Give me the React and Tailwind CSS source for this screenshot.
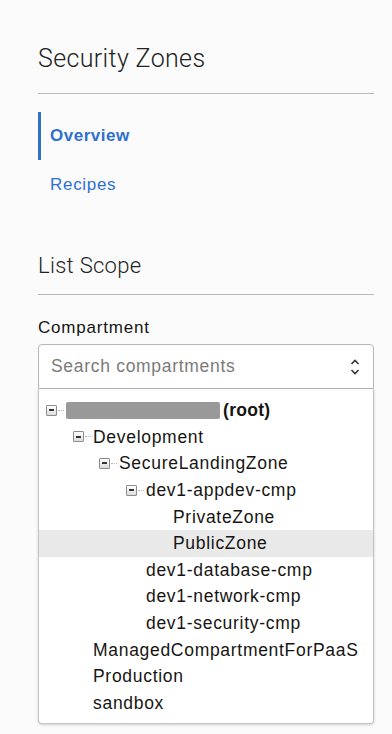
import React from 'react';

const tree = [
  { label: 'root', level: 0, toggle: true, root: true },
  { label: 'Development', level: 1, toggle: true },
  { label: 'SecureLandingZone', level: 2, toggle: true },
  { label: 'dev1-appdev-cmp', level: 3, toggle: true },
  { label: 'PrivateZone', level: 4 },
  { label: 'PublicZone', level: 4, active: true },
  { label: 'dev1-database-cmp', level: 3 },
  { label: 'dev1-network-cmp', level: 3 },
  { label: 'dev1-security-cmp', level: 3 },
  { label: 'ManagedCompartmentForPaaS', level: 1 },
  { label: 'Production', level: 1 },
  { label: 'sandbox', level: 1 },
];

const indents = ['pl-[7px]', 'pl-[34px]', 'pl-[60px]', 'pl-[87px]', 'pl-[114px]'];

function Toggle() {
  // small collapse box with a minus sign and dotted connector
  return (
    <span className="flex items-center w-[20px] shrink-0">
      <span className="flex items-center justify-center w-[11px] h-[11px] border border-[#8c8c8c] rounded-[1px] bg-gradient-to-b from-white to-[#dcdcdc]">
        <span className="block w-[5px] h-[2px] bg-[#333]" />
      </span>
      <span className="block flex-1 border-t border-dotted border-[#b9b9b9] ml-[1px] mr-[2px]" />
    </span>
  );
}

function Row({ item }) {
  return (
    <div
      className={`flex items-center h-[26.6px] ${indents[item.level]} ${
        item.active ? 'bg-[#e9e9e9]' : ''
      }`}
    >
      {item.toggle ? <Toggle /> : <span className="w-[20px] shrink-0" />}
      {item.root ? (
        <span className="flex items-center">
          <span className="block w-[154px] h-[17px] bg-[#8e8e8e] rounded-[2px] opacity-90" />
          <span className="ml-[3px] font-bold tracking-[0.3px]">(root)</span>
        </span>
      ) : (
        <span className="whitespace-nowrap">{item.label}</span>
      )}
    </div>
  );
}

export default function App() {
  return (
    <div className="min-h-screen w-[392px] bg-[#fbfbfb] text-[#161513] font-['Liberation_Sans',Arial,sans-serif]">
      <div className="pl-[38px] pr-[18px] pt-[42px]">
        <h1 className="text-[25px] leading-[34px] font-light tracking-[0.35px] text-[#222] font-['Roboto',sans-serif]">
          Security Zones
        </h1>
        <div className="mt-[17px] border-t border-[#b7b8bd]" />

        <nav className="mt-[18px]">
          <div className="border-l-[3px] border-[#2e6fd0] h-[48px] flex items-center pl-[9px]">
            <span className="text-[17px] font-bold tracking-[0.5px] text-[#2e6fd0]">Overview</span>
          </div>
          <div className="h-[50px] flex items-center pl-[12px]">
            <span className="text-[17px] tracking-[0.7px] text-[#2e6fd0]">Recipes</span>
          </div>
        </nav>

        <h2 className="mt-[41px] text-[22px] leading-[30px] font-light tracking-[0.3px] text-[#222] font-['Roboto',sans-serif]">
          List Scope
        </h2>
        <div className="mt-[13px] border-t border-[#b7b8bd]" />

        <label className="block mt-[22px] text-[17px] leading-[22px] tracking-[0.8px] text-[#161513]">Compartment</label>
        <div className="mt-[5px] h-[45px] border border-[#b6b6b6] rounded-t-[4px] bg-white flex items-center justify-between pl-[12px] pr-[12px]">
          <span className="text-[17.5px] tracking-[0.7px] text-[#7a7a7a]">Search compartments</span>
          <svg width="12" height="20" viewBox="0 0 12 20" fill="none" stroke="#333" strokeWidth="1.6">
            <path d="M2.5 7 L6 3.5 L9.5 7" />
            <path d="M2.5 13 L6 16.5 L9.5 13" />
          </svg>
        </div>

        <div className="w-[336px] border border-[#c4c4c4] border-t-0 rounded-b-[4px] bg-white shadow-[0_1px_3px_rgba(0,0,0,0.18)] pt-[8px] pb-[7px] text-[17.5px] tracking-[0.7px]">
          {tree.map((item) => (
            <Row key={item.label} item={item} />
          ))}
        </div>
      </div>
    </div>
  );
}
